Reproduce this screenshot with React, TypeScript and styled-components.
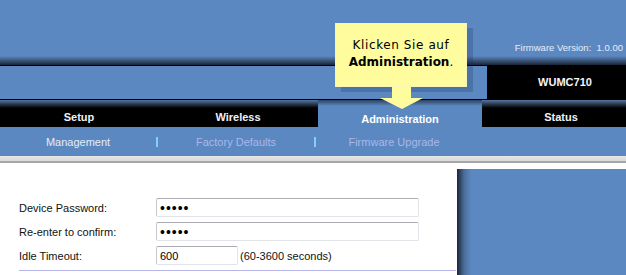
import React from 'react';
import styled, { createGlobalStyle } from 'styled-components';

const GlobalStyle = createGlobalStyle`
  body {
    margin: 0;
    background: #5c88c1;
    font-family: "Liberation Sans", Arial, sans-serif;
  }
`;

const Page = styled.div`
  position: relative;
  width: 626px;
  height: 275px;
  overflow: hidden;
  background: #5c88c1;
  display: flex;
  flex-direction: column;
`;

const TopBand = styled.div`
  height: 66px;
  box-sizing: border-box;
  border-bottom: 1px solid #000;
  background: linear-gradient(to bottom, #5c88c1 0, #5c88c1 56px, #1a2536 65px);
  display: flex;
  justify-content: flex-end;
  padding: 42px 3px 0 0;
`;

const Firmware = styled.span`
  font-size: 9.5px;
  line-height: 12px;
  color: #e6edf7;
  white-space: pre;
`;

const ModelBand = styled.div`
  height: 34px;
  box-sizing: border-box;
  border-bottom: 1px solid #000;
  display: flex;
  justify-content: flex-end;
`;

const ModelBox = styled.div`
  width: 139px;
  box-sizing: border-box;
  padding-left: 17px;
  background: #000;
  color: #f2f5fb;
  font-size: 11px;
  font-weight: bold;
  line-height: 33px;
  text-align: center;
`;

const TabRow = styled.div`
  height: 27px;
  display: flex;
`;

const Tab = styled.div<{ $width: number; $active?: boolean }>`
  flex: 0 0 ${(p) => p.$width}px;
  box-sizing: border-box;
  padding-top: ${(p) => (p.$active ? 12 : 10)}px;
  background: ${(p) =>
    p.$active
      ? 'linear-gradient(to bottom, #2c4260 0, #5c88c1 6px)'
      : 'linear-gradient(to bottom, #56779f 0, #000 8px)'};
  color: ${(p) => (p.$active ? '#ffffff' : '#eef2fb')};
  font-size: 11px;
  font-weight: bold;
  line-height: 14px;
  text-align: center;
`;

const SubNav = styled.div`
  height: 29px;
  display: flex;
  align-items: center;
`;

const SubItem = styled.div<{ $current?: boolean }>`
  flex: 0 0 156px;
  text-align: center;
  font-size: 11px;
  color: ${(p) => (p.$current ? '#e6ecf6' : '#a9b7ea')};
`;

const Separator = styled.div`
  flex: 0 0 2px;
  height: 10px;
  background: #86cdf7;
`;

const GrayBand = styled.div`
  height: 7px;
  background: linear-gradient(to bottom, #e6e6e6 0, #dadada 5px, #a6a6a6 5px, #a6a6a6 7px);
`;

const Content = styled.div`
  flex: 1;
  display: flex;
  background: #fff;
`;

const FormArea = styled.div`
  flex: 0 0 457px;
  box-sizing: border-box;
  padding: 35px 0 0 19px;
`;

const SidePanel = styled.div`
  flex: 1;
  margin-top: 6px;
  background: linear-gradient(to right, #1b2536 0, #4a6c99 7px, #5c88c1 14px);
`;

const FormRow = styled.div`
  display: flex;
  align-items: center;
  height: 19px;
  margin-bottom: 5px;
`;

const Label = styled.label`
  flex: 0 0 137px;
  font-size: 11px;
  color: #111;
`;

const Field = styled.input<{ $width: number }>`
  width: ${(p) => p.$width}px;
  height: 19px;
  box-sizing: border-box;
  border: 1px solid #e0e3e8;
  border-top-color: #abadb3;
  border-left-color: #c6c8cd;
  border-radius: 2px;
  padding: 0 3px;
  font-family: "Liberation Sans", Arial, sans-serif;
  font-size: ${(p) => (p.type === 'password' ? 14 : 11)}px;
  letter-spacing: ${(p) => (p.type === 'password' ? 1 : 0)}px;
  color: #000;
  background: #fff;
  outline: none;
`;

const Hint = styled.span`
  margin-left: 2px;
  font-size: 11px;
  color: #111;
`;

const Divider = styled.div`
  width: 437px;
  height: 1px;
  margin-top: 3px;
  background: #b6b6ea;
`;

const Callout = styled.div`
  position: absolute;
  left: 335px;
  top: 23px;
  width: 132px;
  height: 64px;
  box-sizing: border-box;
  padding-top: 13px;
  background: #fffc9e;
  border: 1px solid #fbf4b8;
  box-shadow: 6px 5px 0 rgba(20, 40, 80, 0.22);
  font-family: "DejaVu Sans", Verdana, sans-serif;
  font-size: 12px;
  line-height: 17px;
  color: #000;
  text-align: center;
`;

const CalloutLine = styled.span`
  letter-spacing: 0.6px;
`;

const Arrow = styled.svg`
  position: absolute;
  left: 44px;
  top: 63px;
`;

export default function App() {
  return (
    <Page>
      <GlobalStyle />
      <TopBand>
        <Firmware>Firmware Version:  1.0.00</Firmware>
      </TopBand>
      <ModelBand>
        <ModelBox>WUMC710</ModelBox>
      </ModelBand>
      <TabRow>
        <Tab $width={158}>Setup</Tab>
        <Tab $width={160}>Wireless</Tab>
        <Tab $width={164} $active>
          Administration
        </Tab>
        <Tab $width={158}>Status</Tab>
      </TabRow>
      <SubNav>
        <SubItem $current>Management</SubItem>
        <Separator />
        <SubItem>Factory Defaults</SubItem>
        <Separator />
        <SubItem>Firmware Upgrade</SubItem>
      </SubNav>
      <GrayBand />
      <Content>
        <FormArea>
          <FormRow>
            <Label>Device Password:</Label>
            <Field type="password" value="admin" readOnly $width={263} />
          </FormRow>
          <FormRow>
            <Label>Re-enter to confirm:</Label>
            <Field type="password" value="admin" readOnly $width={263} />
          </FormRow>
          <FormRow>
            <Label>Idle Timeout:</Label>
            <Field type="text" value="600" readOnly $width={82} />
            <Hint>(60-3600 seconds)</Hint>
          </FormRow>
          <Divider />
        </FormArea>
        <SidePanel />
      </Content>
      <Callout>
        <CalloutLine>Klicken Sie auf</CalloutLine>
        <br />
        <b>Administration</b>.
        <Arrow width="44" height="23" viewBox="0 0 44 23">
          <polygon points="12,0 31,0 31,11 43,11 22,22 0,11 12,11" fill="#fffc9e" />
        </Arrow>
      </Callout>
    </Page>
  );
}
